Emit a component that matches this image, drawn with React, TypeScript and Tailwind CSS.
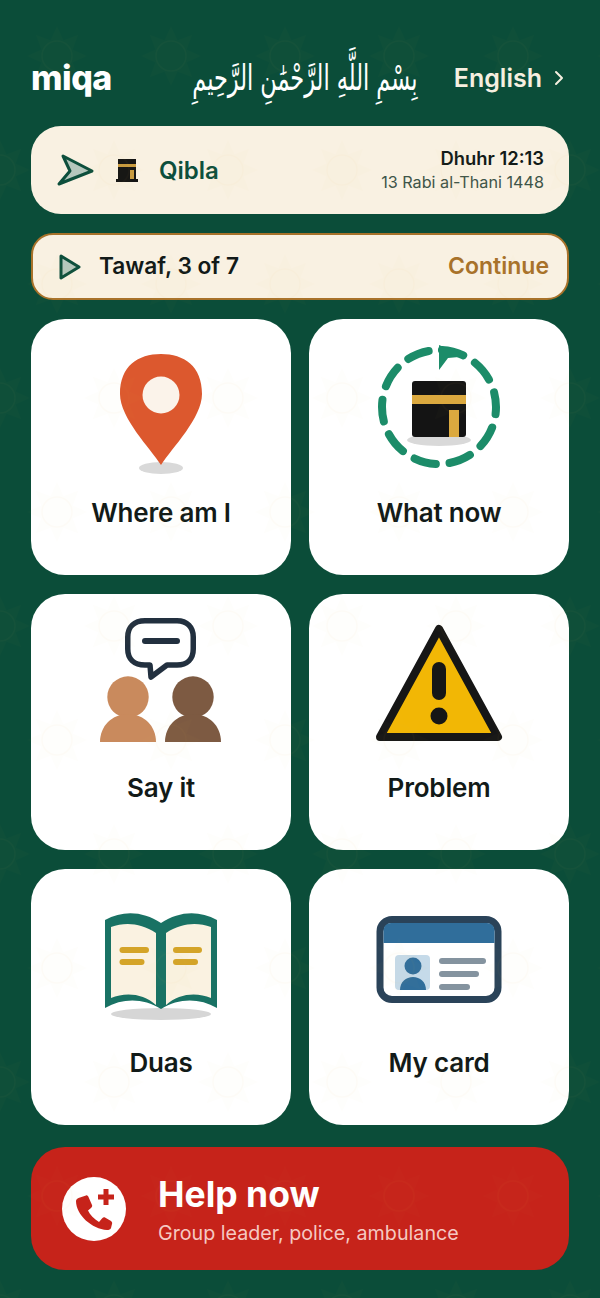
const font = "font-['Inter','Liberation_Sans',sans-serif]";

// tile of the faint star pattern, repeated over the whole page
const star = (cx: number, cy: number) => {
  const pts: string[] = [];
  for (let i = 0; i < 16; i++) {
    const r = i % 2 === 0 ? 30 : 17;
    const a = (Math.PI * i) / 8 - Math.PI / 2;
    pts.push(`${(cx + r * Math.cos(a)).toFixed(1)},${(cy + r * Math.sin(a)).toFixed(1)}`);
  }
  return (
    `<polygon points='${pts.join(" ")}' fill='%23d9b24a' fill-opacity='0.35'/>` +
    `<circle cx='${cx}' cy='${cy}' r='15' fill='none' stroke='%23d9b24a' stroke-width='1.5'/>`
  );
};
const tile =
  `<svg xmlns='http://www.w3.org/2000/svg' width='114' height='228'>` +
  star(57, 56) + star(0, 170) + star(114, 170) +
  `</svg>`;

function Pin() {
  return (
    <svg className="mt-[33px]" width="90" height="124" viewBox="0 0 90 124">
      <ellipse cx="45" cy="116" rx="22" ry="6" fill="#d9d9d9" />
      <path d="M45 113 C34 96 4 66 4 42 C4 14 22 2 45 2 C68 2 86 14 86 42 C86 66 56 96 45 113Z" fill="#dc582e" />
      <circle cx="45" cy="43" r="18.5" fill="#fbf3ea" />
    </svg>
  );
}

function Kaaba() {
  return (
    <svg className="mt-[26px]" width="124" height="124" viewBox="0 0 124 124">
      <circle cx="62" cy="62" r="57" fill="none" stroke="#1c8c69" strokeWidth="8" strokeLinecap="round" strokeDasharray="22 13.8" strokeDashoffset="-3" transform="rotate(-90 62 62)" />
      <path d="M62 0 L82 8 L82 12 L71 13 L62 25Z" fill="#1c8c69" />
      <ellipse cx="62" cy="95" rx="32" ry="6" fill="#d9d9d9" />
      <rect x="35" y="36" width="54" height="56" rx="3" fill="#141414" />
      <rect x="35" y="50" width="54" height="9" fill="#dba93f" />
      <rect x="72" y="65" width="10" height="27" fill="#dba93f" />
    </svg>
  );
}

function People() {
  return (
    <svg className="mt-[21px]" width="124" height="132" viewBox="0 0 124 132">
      <path d="M46 5.75 H78 C88 5.75 94.25 12 94.25 22 V34 C94.25 44 88 50 78 50 H68 L52 62 L51 50 H46 C35 50 28.75 44 28.75 34 V22 C28.75 12 35 5.75 46 5.75Z" fill="#fff" stroke="#22303f" strokeWidth="5.5" strokeLinejoin="round" />
      <rect x="43" y="23" width="38" height="6" rx="3" fill="#22303f" />
      <circle cx="29" cy="82" r="20.7" fill="#c98a5d" />
      <path d="M1 127 C1 111 13 99 29 99 C45 99 57 111 57 127Z" fill="#c98a5d" />
      <circle cx="94" cy="82" r="20.7" fill="#7d5a42" />
      <path d="M66 127 C66 111 78 99 94 99 C110 99 122 111 122 127Z" fill="#7d5a42" />
    </svg>
  );
}

function Warning() {
  return (
    <svg className="mt-[26px]" width="128" height="124" viewBox="0 0 128 124">
      <path d="M64 9 L123 117 H5Z" fill="#f2b705" stroke="#161616" strokeWidth="8" strokeLinejoin="round" />
      <rect x="57" y="42" width="14" height="38" rx="7" fill="#161616" />
      <circle cx="64" cy="96" r="8.5" fill="#161616" />
    </svg>
  );
}

function Book() {
  return (
    <svg className="mt-[42px]" width="116" height="112" viewBox="0 0 116 112">
      <ellipse cx="58" cy="103" rx="50" ry="6" fill="#d6d6d6" />
      <path d="M2 9 C20 -1 40 0 58 12 C76 0 96 -1 114 9 V97 C96 87 76 87 58 98 C40 87 20 87 2 97Z" fill="#197264" />
      <path d="M8 16 C22 11 38 12 53 22 V94 C40 82 22 81 8 87Z" fill="#faf2e1" />
      <path d="M108 16 C94 11 78 12 63 22 V94 C76 82 94 81 108 87Z" fill="#faf2e1" />
      <rect x="16.5" y="36" width="29.5" height="6" rx="3" fill="#d4a428" />
      <rect x="16.5" y="48" width="25" height="6" rx="3" fill="#d4a428" />
      <rect x="70" y="36" width="29" height="6" rx="3" fill="#d4a428" />
      <rect x="70" y="48" width="25" height="6" rx="3" fill="#d4a428" />
    </svg>
  );
}

function IdCard() {
  return (
    <svg className="mt-[47px]" width="126" height="88" viewBox="0 0 126 88">
      <rect x="4" y="3.5" width="118" height="80" rx="12" fill="#fff" stroke="#2a4359" strokeWidth="7" />
      <path d="M7.5 27 V15 C7.5 10 11 7 15 7 H111 C115 7 118.5 10 118.5 15 V27Z" fill="#306e9b" />
      <rect x="19" y="39" width="35" height="35" rx="4" fill="#c5dae9" />
      <circle cx="37" cy="50" r="8.5" fill="#306e9b" />
      <path d="M24 74 C24 66 30 61 37 61 C44 61 50 66 50 74Z" fill="#306e9b" />
      <rect x="63" y="42" width="47" height="6" rx="3" fill="#84939f" />
      <rect x="63" y="55" width="40" height="6" rx="3" fill="#84939f" />
      <rect x="63" y="68" width="31" height="6" rx="3" fill="#84939f" />
    </svg>
  );
}

function Tile({ label, children }: { label: string; children: React.ReactNode }) {
  return (
    <div className="flex h-[256px] flex-col items-center rounded-[34px] bg-white">
      <div className="flex h-[175px] w-full items-start justify-center">{children}</div>
      <div className="mt-px text-[26px] leading-[36px] font-semibold tracking-[-0.2px] text-[#121a18]">{label}</div>
    </div>
  );
}

export default function App() {
  return (
    <div className={`relative h-[1298px] w-[600px] overflow-hidden bg-[#0b4d39] ${font}`}>
      <div className="flex flex-col px-[31px]">
        <header className="flex h-[126px] items-center justify-between pt-[30px]">
          <span className="text-[34px] leading-none font-extrabold tracking-[-0.5px] text-white">miqa</span>
          <div className="ml-[44px] flex w-[220px] justify-center">
            <span dir="rtl" className="scale-x-[0.64] font-['DejaVu_Sans',serif] text-[35px] leading-none font-medium whitespace-nowrap text-white">بِسْمِ اللَّهِ الرَّحْمَٰنِ الرَّحِيمِ</span>
          </div>
          <span className="flex items-center gap-[12px] pr-[5px] text-[25px] leading-none font-semibold text-[#f6efe0]">
            English
            <svg width="10" height="16" viewBox="0 0 10 16" fill="none" stroke="#f6efe0" strokeWidth="2" strokeLinecap="round" strokeLinejoin="round"><path d="M2 2 L8 8 L2 14" /></svg>
          </span>
        </header>

        <div className="flex h-[88px] items-center justify-between rounded-[30px] bg-[#f9f1e2] pr-[25px] pl-[26px]">
          <div className="flex items-center">
            <svg width="38" height="34" viewBox="0 0 38 34"><path d="M6 3 L35 18 L2 31 L13 18Z" fill="#b5c7bd" stroke="#0d4f3c" strokeWidth="3" strokeLinejoin="round" /></svg>
            <svg className="ml-[21px]" width="22" height="24" viewBox="0 0 22 24">
              <rect x="2" y="1" width="18" height="21" fill="#141414" />
              <rect x="2" y="6" width="18" height="3" fill="#c79a3f" />
              <rect x="14" y="12" width="4" height="10" fill="#c79a3f" />
              <rect x="0" y="21" width="22" height="3" fill="#141414" />
            </svg>
            <span className="mt-px ml-[21px] text-[24px] leading-none font-semibold text-[#0d4f3c]">Qibla</span>
          </div>
          <div className="flex flex-col items-end">
            <span className="text-[18.4px] leading-[24px] font-semibold text-[#121a18]">Dhuhr 12:13</span>
            <span className="text-[16.2px] leading-[25px] text-[#3f5549]">13 Rabi al-Thani 1448</span>
          </div>
        </div>

        <div className="mt-[19px] flex h-[67px] items-center justify-between rounded-[22px] border-2 border-[#a8722a] bg-[#f9f1e2] pr-[18px] pl-[26px]">
          <div className="flex items-center gap-[18px]">
            <svg width="22" height="26" viewBox="0 0 22 26"><path d="M2 2 L20 13 L2 24Z" fill="#b5c7bd" stroke="#0d4f3c" strokeWidth="3" strokeLinejoin="round" /></svg>
            <span className="text-[22.7px] leading-none font-semibold text-[#121a18]">Tawaf, 3 of 7</span>
          </div>
          <span className="text-[23px] leading-none font-semibold text-[#a8722a]">Continue</span>
        </div>

        <div className="mt-[19px] grid grid-cols-2 gap-x-[18px] gap-y-[19px]">
          <Tile label="Where am I"><Pin /></Tile>
          <Tile label="What now"><Kaaba /></Tile>
          <Tile label="Say it"><People /></Tile>
          <Tile label="Problem"><Warning /></Tile>
          <Tile label="Duas"><Book /></Tile>
          <Tile label="My card"><IdCard /></Tile>
        </div>

        <div className="mt-[22px] flex h-[123px] items-center rounded-[34px] bg-[#c6231a] pl-[31px]">
          <svg width="64" height="64" viewBox="0 0 64 64">
            <circle cx="32" cy="32" r="32" fill="#fff" />
            <path d="M14 24 C14 22 16 21 18 20.5 L24 18.5 C25 18 26 19 26.5 20 L30 28 C30.5 29 30 30 29 31 L26 33.5 C28 38 32 42 37 45 L40 41.5 C41 40.5 42 40 43 40.5 L49 44 C50 45 50.5 46 50 47 L49 51 C48.5 52.5 47 53 45 53 C30 52 14 38 14 24Z" fill="#c6231a" />
            <path d="M41.5 12 H46.5 V17.5 H52 V22.5 H46.5 V28 H41.5 V22.5 H36 V17.5 H41.5Z" fill="#c6231a" />
          </svg>
          <div className="ml-[32px] flex flex-col pt-[2px]">
            <span className="text-[35.5px] leading-[42px] font-bold text-white">Help now</span>
            <span className="mt-[4px] text-[19.7px] leading-[26px] text-[#f5c9c2]">Group leader, police, ambulance</span>
          </div>
        </div>
      </div>

      <div
        className="pointer-events-none absolute inset-0 opacity-[0.05]"
        style={{ backgroundImage: `url("data:image/svg+xml,${tile.replace(/</g, "%3C").replace(/>/g, "%3E")}")` }}
      />
    </div>
  );
}
